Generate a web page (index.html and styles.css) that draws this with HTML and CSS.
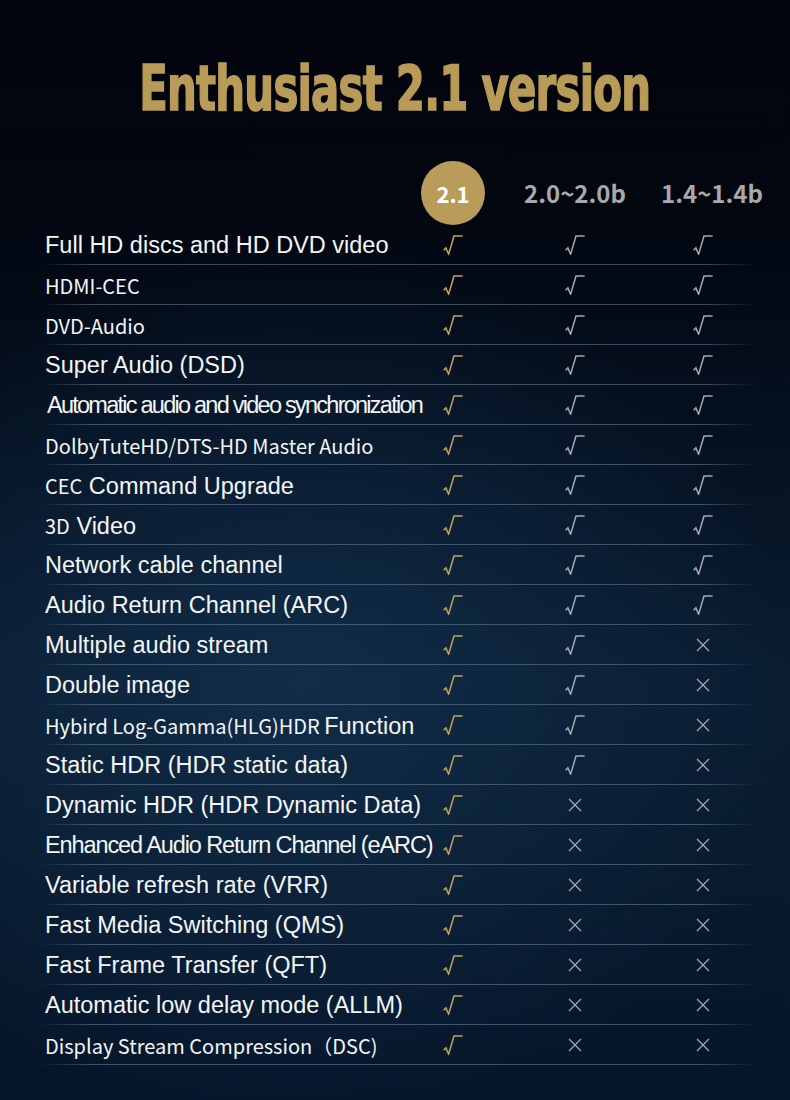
FILE: index.html
```html
<!DOCTYPE html>
<html lang="en">
<head>
<meta charset="utf-8">
<title>Enthusiast 2.1 version</title>
<link rel="stylesheet" href="styles.css">
</head>
<body>
<svg class="defs" width="0" height="0" aria-hidden="true">
  <symbol id="chk" viewBox="0 0 20 20">
    <path d="M0.6 15.2 L2.9 12.9 L5.6 19.2 L11 1 L19.6 1" fill="none" stroke="currentColor" stroke-width="1.5" stroke-linejoin="miter"/>
  </symbol>
  <symbol id="crs" viewBox="0 0 14 14">
    <path d="M1 1 L13 13 M13 1 L1 13" fill="none" stroke="currentColor" stroke-width="1.3"/>
  </symbol>
</svg>
<main class="page">
  <h1 class="title"><span class="title-text">Enthusiast 2.1 version</span></h1>
  <div class="table">
    <div class="row head">
      <div></div>
      <div class="badge">2.1</div>
      <div class="ver">2.0~2.0b</div>
      <div class="ver ver-last">1.4~1.4b</div>
    </div>

    <div class="row"><div class="label t">Full HD discs and HD DVD video</div>
      <svg class="chk gold"><use href="#chk"/></svg><svg class="chk grey"><use href="#chk"/></svg><svg class="chk grey"><use href="#chk"/></svg></div>
    <div class="row"><div class="label c">HDMI-CEC</div>
      <svg class="chk gold"><use href="#chk"/></svg><svg class="chk grey"><use href="#chk"/></svg><svg class="chk grey"><use href="#chk"/></svg></div>
    <div class="row"><div class="label c">DVD-Audio</div>
      <svg class="chk gold"><use href="#chk"/></svg><svg class="chk grey"><use href="#chk"/></svg><svg class="chk grey"><use href="#chk"/></svg></div>
    <div class="row"><div class="label t">Super Audio (DSD)</div>
      <svg class="chk gold"><use href="#chk"/></svg><svg class="chk grey"><use href="#chk"/></svg><svg class="chk grey"><use href="#chk"/></svg></div>
    <div class="row"><div class="label t tight">Automatic audio and video synchronization</div>
      <svg class="chk gold"><use href="#chk"/></svg><svg class="chk grey"><use href="#chk"/></svg><svg class="chk grey"><use href="#chk"/></svg></div>
    <div class="row"><div class="label c">DolbyTuteHD/DTS-HD Master Audio</div>
      <svg class="chk gold"><use href="#chk"/></svg><svg class="chk grey"><use href="#chk"/></svg><svg class="chk grey"><use href="#chk"/></svg></div>
    <div class="row"><div class="label t"><span class="c">CEC</span> Command Upgrade</div>
      <svg class="chk gold"><use href="#chk"/></svg><svg class="chk grey"><use href="#chk"/></svg><svg class="chk grey"><use href="#chk"/></svg></div>
    <div class="row"><div class="label t"><span class="c">3D</span> Video</div>
      <svg class="chk gold"><use href="#chk"/></svg><svg class="chk grey"><use href="#chk"/></svg><svg class="chk grey"><use href="#chk"/></svg></div>
    <div class="row"><div class="label t">Network cable channel</div>
      <svg class="chk gold"><use href="#chk"/></svg><svg class="chk grey"><use href="#chk"/></svg><svg class="chk grey"><use href="#chk"/></svg></div>
    <div class="row"><div class="label t">Audio Return Channel (ARC)</div>
      <svg class="chk gold"><use href="#chk"/></svg><svg class="chk grey"><use href="#chk"/></svg><svg class="chk grey"><use href="#chk"/></svg></div>
    <div class="row"><div class="label t">Multiple audio stream</div>
      <svg class="chk gold"><use href="#chk"/></svg><svg class="chk grey"><use href="#chk"/></svg><svg class="crs"><use href="#crs"/></svg></div>
    <div class="row"><div class="label t">Double image</div>
      <svg class="chk gold"><use href="#chk"/></svg><svg class="chk grey"><use href="#chk"/></svg><svg class="crs"><use href="#crs"/></svg></div>
    <div class="row"><div class="label c">Hybird Log-Gamma(HLG)HDR <span class="t">Function</span></div>
      <svg class="chk gold"><use href="#chk"/></svg><svg class="chk grey"><use href="#chk"/></svg><svg class="crs"><use href="#crs"/></svg></div>
    <div class="row"><div class="label t">Static HDR (HDR static data)</div>
      <svg class="chk gold"><use href="#chk"/></svg><svg class="chk grey"><use href="#chk"/></svg><svg class="crs"><use href="#crs"/></svg></div>
    <div class="row"><div class="label t">Dynamic HDR (HDR Dynamic Data)</div>
      <svg class="chk gold"><use href="#chk"/></svg><svg class="crs"><use href="#crs"/></svg><svg class="crs"><use href="#crs"/></svg></div>
    <div class="row"><div class="label t snug">Enhanced Audio Return Channel (eARC)</div>
      <svg class="chk gold"><use href="#chk"/></svg><svg class="crs"><use href="#crs"/></svg><svg class="crs"><use href="#crs"/></svg></div>
    <div class="row"><div class="label t">Variable refresh rate (VRR)</div>
      <svg class="chk gold"><use href="#chk"/></svg><svg class="crs"><use href="#crs"/></svg><svg class="crs"><use href="#crs"/></svg></div>
    <div class="row"><div class="label t">Fast Media Switching (QMS)</div>
      <svg class="chk gold"><use href="#chk"/></svg><svg class="crs"><use href="#crs"/></svg><svg class="crs"><use href="#crs"/></svg></div>
    <div class="row"><div class="label t">Fast Frame Transfer (QFT)</div>
      <svg class="chk gold"><use href="#chk"/></svg><svg class="crs"><use href="#crs"/></svg><svg class="crs"><use href="#crs"/></svg></div>
    <div class="row"><div class="label t">Automatic low delay mode (ALLM)</div>
      <svg class="chk gold"><use href="#chk"/></svg><svg class="crs"><use href="#crs"/></svg><svg class="crs"><use href="#crs"/></svg></div>
    <div class="row"><div class="label c">Display Stream Compression（DSC)</div>
      <svg class="chk gold"><use href="#chk"/></svg><svg class="crs"><use href="#crs"/></svg><svg class="crs"><use href="#crs"/></svg></div>
  </div>
</main>
</body>
</html>
```

FILE: styles.css
```css
html, body {
  margin: 0;
  padding: 0;
}
body {
  width: 790px;
  min-height: 1100px;
  color: #f4f5f7;
  font-family: "Liberation Sans", Arial, sans-serif;
  background:
    radial-gradient(ellipse 62% 40% at 38% 62%, rgba(22, 58, 92, 0.55) 0%, rgba(22, 58, 92, 0) 100%),
    linear-gradient(180deg, #02050e 0%, #02060f 18%, #051121 40%, #0a1d31 62%, #081a2d 80%, #06152a 100%);
}
.defs {
  position: absolute;
  width: 0;
  height: 0;
}
.page {
  padding-top: 58px;
}
.title {
  margin: 0;
  height: 62px;
  text-align: center;
  font-family: "DejaVu Sans Condensed", "DejaVu Sans", sans-serif;
  font-weight: bold;
  font-size: 62px;
  line-height: 62px;
  color: #b99b58;
  white-space: nowrap;
}
.title-text {
  display: inline-block;
  transform: scaleX(0.75);
  letter-spacing: -1px;
  -webkit-text-stroke: 1.6px #b99b58;
}
.table {
  margin: 40px 0 0 40px;
  width: 715px;
}
.row {
  display: grid;
  grid-template-columns: 383px 60px 184px 72px 1fr;
  align-items: center;
  justify-items: center;
  height: 40px;
  background-image: linear-gradient(90deg, rgba(140, 160, 182, 0) 0%, rgba(140, 160, 182, 0.42) 7%, rgba(140, 160, 182, 0.42) 93%, rgba(140, 160, 182, 0) 100%);
  background-size: 100% 1px;
  background-position: 0 100%;
  background-repeat: no-repeat;
}
.row.head {
  height: 65px;
  background: none;
}
.badge {
  width: 64px;
  height: 64px;
  border-radius: 50%;
  background: #b99b5a;
  color: #ffffff;
  display: flex;
  align-items: center;
  justify-content: center;
  font-family: "Noto Sans CJK SC", "Noto Sans", sans-serif;
  font-weight: bold;
  font-size: 22px;
}
.ver {
  font-family: "Noto Sans CJK SC", "Noto Sans", sans-serif;
  font-weight: bold;
  font-size: 24px;
  color: #a7a9ac;
  white-space: nowrap;
}
.ver-last {
  padding-left: 18px;
}
.label {
  justify-self: start;
  padding-left: 5px;
  white-space: nowrap;
  color: #f4f5f7;
}
.t {
  font-family: "Liberation Sans", Arial, sans-serif;
  font-size: 23.5px;
}
.c {
  font-family: "Noto Sans CJK SC", "Noto Sans", sans-serif;
  font-size: 20px;
}
.tight {
  letter-spacing: -1.75px;
  padding-left: 7px;
}
.snug {
  letter-spacing: -1.1px;
}
.chk {
  width: 20px;
  height: 20px;
}
.gold {
  color: #c3a35c;
}
.grey {
  color: #a4a8ad;
}
.crs {
  width: 14px;
  height: 14px;
  color: #a4a8ad;
}
```
